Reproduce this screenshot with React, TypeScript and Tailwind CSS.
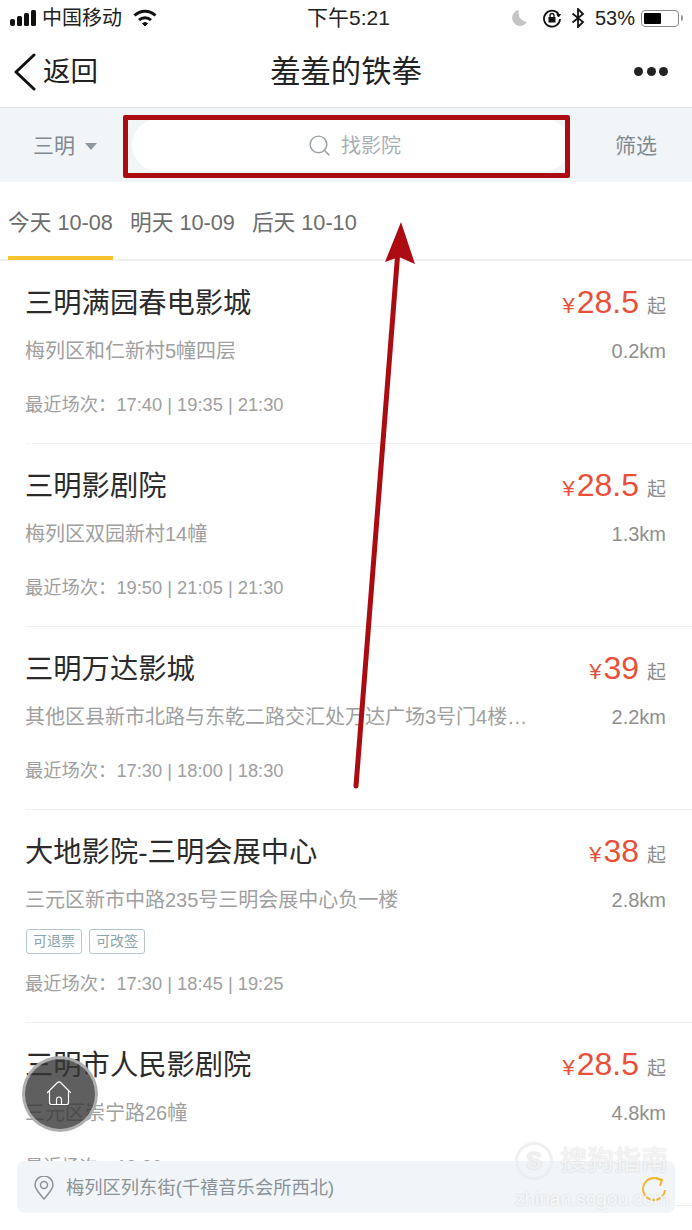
import React from "react";
import { Search } from "lucide-react";

interface Cinema {
  name: string;
  address: string;
  price: string;
  distance: string;
  times: string;
  tags?: string[];
}

const cinemas: Cinema[] = [
  { name: "三明满园春电影城", address: "梅列区和仁新村5幢四层", price: "28.5", distance: "0.2km", times: "17:40 | 19:35 | 21:30" },
  { name: "三明影剧院", address: "梅列区双园新村14幢", price: "28.5", distance: "1.3km", times: "19:50 | 21:05 | 21:30" },
  { name: "三明万达影城", address: "其他区县新市北路与东乾二路交汇处万达广场3号门4楼…", price: "39", distance: "2.2km", times: "17:30 | 18:00 | 18:30" },
  { name: "大地影院-三明会展中心", address: "三元区新市中路235号三明会展中心负一楼", price: "38", distance: "2.8km", times: "17:30 | 18:45 | 19:25", tags: ["可退票", "可改签"] },
  { name: "三明市人民影剧院", address: "三元区崇宁路26幢", price: "28.5", distance: "4.8km", times: "19:30" },
];

const StatusBar = () => (
  <div className="h-[36px] grid grid-cols-[1fr_auto_1fr] items-center pl-[10px] pr-[9px] text-[20px] text-[#222]">
    <div className="flex items-center">
      <svg width="28" height="18" viewBox="0 0 28 18" className="mr-[4px]">
        <rect x="0" y="10" width="5" height="7" rx="2" fill="#111" />
        <rect x="7" y="7" width="5" height="10" rx="1.5" fill="#111" />
        <rect x="14" y="4" width="5" height="13" rx="1.5" fill="#111" />
        <rect x="21" y="1" width="5" height="16" rx="1.5" fill="#111" />
      </svg>
      <span>中国移动</span>
      <svg width="24" height="18" viewBox="0 0 24 18" className="ml-[11px]" fill="none" stroke="#111" strokeWidth="3">
        <path d="M1.5 6.5a15 15 0 0 1 21 0" />
        <path d="M6 11a9 9 0 0 1 12 0" />
        <path d="M9.5 14.5 12 17l2.5-2.5a4 4 0 0 0-5 0z" fill="#111" strokeWidth="1" />
      </svg>
    </div>
    <span className="text-[21px] ml-[4px]">下午5:21</span>
    <div className="flex items-center justify-end">
      <svg width="18" height="20" viewBox="0 0 18 20" className="mr-[14px]">
        <path d="M9 2a8 8 0 1 0 8 12 9 9 0 0 1-8-12z" fill="#c4c4c4" />
      </svg>
      <svg width="20" height="20" viewBox="0 0 20 20" className="mr-[9px]" fill="none" stroke="#111" strokeWidth="1.8">
        <path d="M16.5 6A8 8 0 1 0 18 11" />
        <path d="M15 6.5h3.5L16.5 9z" fill="#111" strokeWidth="1" />
        <rect x="6.5" y="9" width="7" height="5.5" fill="#111" stroke="none" />
        <path d="M8 9V7.5a2 2 0 0 1 4 0V9" strokeWidth="1.3" />
      </svg>
      <svg width="14" height="20" viewBox="0 0 14 20" className="mr-[10px]" fill="none" stroke="#111" strokeWidth="1.8">
        <path d="M1.5 5.5 12 14l-5 5V1l5 5L1.5 14.5" />
      </svg>
      <span className="mr-[6px]">53%</span>
      <div className="w-[38px] h-[17px] rounded-[4px] border border-[#8a8a8a] p-[2px]">
        <div className="w-[53%] h-full bg-black rounded-[1px]" />
      </div>
      <div className="w-[2px] h-[6px] bg-[#9a9a9a] rounded-r ml-[2px]" />
    </div>
  </div>
);

const NavBar = () => (
  <div className="h-[72px] grid grid-cols-[1fr_auto_1fr] items-center border-b border-[#dfe3e6]">
    <div className="flex items-center pl-[14px]">
      <svg width="22" height="38" viewBox="0 0 22 38" fill="none" stroke="#111" strokeWidth="3" strokeLinecap="round" strokeLinejoin="round">
        <path d="M20 2 2 19l18 17" />
      </svg>
      <span className="text-[27.5px] text-[#222] ml-[7px]">返回</span>
    </div>
    <span className="text-[30.3px] text-[#222]">羞羞的铁拳</span>
    <div className="flex justify-end gap-[3.5px] pr-[24px]">
      <div className="w-[9px] h-[9px] rounded-full bg-[#222]" />
      <div className="w-[9px] h-[9px] rounded-full bg-[#222]" />
      <div className="w-[9px] h-[9px] rounded-full bg-[#222]" />
    </div>
  </div>
);

const FilterBar = () => (
  <div className="relative h-[74px] bg-[#f1f5f8] flex items-center">
    <div className="w-[132px] flex items-center pl-[33px] pt-[1px] text-[21px] text-[#7f8a90]">
      <span>三明</span>
      <div className="ml-[10px] mt-[2px] w-0 h-0 border-x-[6px] border-x-transparent border-t-[7px] border-t-[#8d979d]" />
    </div>
    <div className="w-[438px] h-[52px] pl-[6px] pt-[1px] rounded-full bg-white flex items-center justify-center text-[#a9b0b5] text-[20px]">
      <Search size={25} strokeWidth={1.4} className="mr-[9px] text-[#9aa2a7]" />
      <span>找影院</span>
    </div>
    <span className="ml-[45px] mt-[1px] text-[21px] text-[#7f8a90]">筛选</span>
    {/* red annotation box */}
    <div className="absolute left-[123px] top-[7px] w-[447px] h-[63px] border-[5px] border-[#ab0c12] rounded-[2px]" />
  </div>
);

const DateTabs = () => (
  <div className="h-[79px] flex pl-[8px] gap-[17px] border-b-2 border-[#f0f0f0] text-[21.7px] text-[#6d6d6d]">
    <div className="relative w-[105px] pt-[25px] whitespace-nowrap">
      今天 10-08
      <div className="absolute left-0 right-0 bottom-[-1px] h-[4px] bg-[#f5c330]" />
    </div>
    <div className="pt-[25px] whitespace-nowrap">明天 10-09</div>
    <div className="pt-[25px] whitespace-nowrap">后天 10-10</div>
  </div>
);

const CinemaRow = ({ cinema }: { cinema: Cinema }) => (
  <div className="ml-[26px] pr-[26px] border-b border-[#f0f0f0] pt-[22px] pb-[26px]">
    <div className="flex items-center justify-between h-[40px]">
      <span className="text-[28.3px] ml-[-1px] text-[#2b2b2b]">{cinema.name}</span>
      <div className="flex items-baseline mt-[-2px] text-[#e8503a]">
        <span className="text-[22px] mr-[2px]">¥</span>
        <span className="text-[32px]">{cinema.price}</span>
        <span className="text-[19px] text-[#8d8d8d] ml-[8px]">起</span>
      </div>
    </div>
    <div className="flex items-center justify-between h-[30px] mt-[13px] text-[20px] text-[#a0a0a0]">
      <span className="whitespace-nowrap ml-[-1px]">{cinema.address}</span>
      <span className="text-[#8f8f8f]">{cinema.distance}</span>
    </div>
    {cinema.tags ? (
      <div className="flex gap-[7px] mt-[14px] h-[25px]">
        {cinema.tags.map((t) => (
          <div key={t} className="w-[56px] h-[25px] border border-[#b5c6cc] rounded-[3px] flex items-center justify-center text-[14px] text-[#8ba3ab]">
            {t}
          </div>
        ))}
      </div>
    ) : null}
    <div className={`h-[24px] flex items-center text-[18.3px] ml-[-1px] text-[#a0a0a0] ${cinema.tags ? "mt-[18px]" : "mt-[27px]"}`}>
      最近场次：{cinema.times}
    </div>
  </div>
);

export default function App() {
  return (
    <div className="relative w-[692px] h-[1230px] overflow-hidden bg-white font-['Liberation_Sans','Noto_Sans_CJK_SC',sans-serif]">
      <StatusBar />
      <NavBar />
      <FilterBar />
      <DateTabs />
      {cinemas.map((c) => (
        <CinemaRow key={c.name} cinema={c} />
      ))}

      {/* annotation arrow */}
      <svg width="692" height="1230" viewBox="0 0 692 1230" className="absolute left-0 top-0 pointer-events-none">
        <path d="M356 786 398 250" stroke="#ab0c12" strokeWidth="5" strokeLinecap="round" />
        <path d="M401 222 415 264 399 257 385 262z" fill="#ab0c12" />
      </svg>

      {/* floating home button */}
      <div className="absolute left-[22px] top-[1056px] w-[76px] h-[76px] rounded-full bg-[#373737]/80 border-[3px] border-[#c4c4c4]/80 flex items-center justify-center">
        <svg width="26" height="25" viewBox="0 0 26 25" fill="none" stroke="#fff" strokeWidth="1.2" strokeLinejoin="round" strokeLinecap="round" className="mt-[-2px] mr-[2px]">
          <path d="M1.5 11.5 11.5 1.5a2 2 0 0 1 3 0l10 10" />
          <path d="M3.5 10v11.5a2 2 0 0 0 2 2h15a2 2 0 0 0 2-2V10" />
          <path d="M10.5 23.5v-5a2.5 2.5 0 0 1 5 0v5" />
        </svg>
      </div>

      {/* bottom location bar */}
      <div className="absolute left-[17px] top-[1161px] w-[658px] h-[52px] rounded-[8px] bg-[#f1f5f8] flex items-center pl-[17px] text-[18.3px] text-[#8a9297]">
        <svg width="20" height="24" viewBox="0 0 20 24" fill="none" stroke="#8a9297" strokeWidth="1.5" className="mr-[12px] mt-[1px]">
          <path d="M10 23C5 17 1 13 1 9a9 9 0 0 1 18 0c0 4-4 8-9 14z" strokeLinejoin="round" />
          <circle cx="10" cy="9" r="3.5" />
        </svg>
        <span className="mt-[2px]">梅列区列东街(千禧音乐会所西北)</span>
        <svg width="26" height="26" viewBox="0 0 26 26" className="absolute right-[8px] top-[15px]" fill="none" stroke="#f2b632" strokeWidth="2">
          <path d="M20 4.5A11 11 0 1 0 24 14" />
          <path d="M15 2l6 2-2 6" />
        </svg>
      </div>

      {/* watermark */}
      <div className="absolute left-[515px] top-[1141px] text-white pointer-events-none [text-shadow:0_0_2px_rgba(120,120,120,0.3)]">
        <div className="flex items-center">
          <div className="w-[38px] h-[38px] rounded-full border-[3px] border-[#ececec]/80 flex items-center justify-center text-[24px] font-bold text-[#f0f0f0]">S</div>
          <span className="ml-[7px] text-[27px] text-[#f4f4f4]">搜狗指南</span>
        </div>
        <div className="text-[19px] mt-[7px] leading-[20px] text-white/80">zhinan.sogou.com</div>
      </div>
    </div>
  );
}
